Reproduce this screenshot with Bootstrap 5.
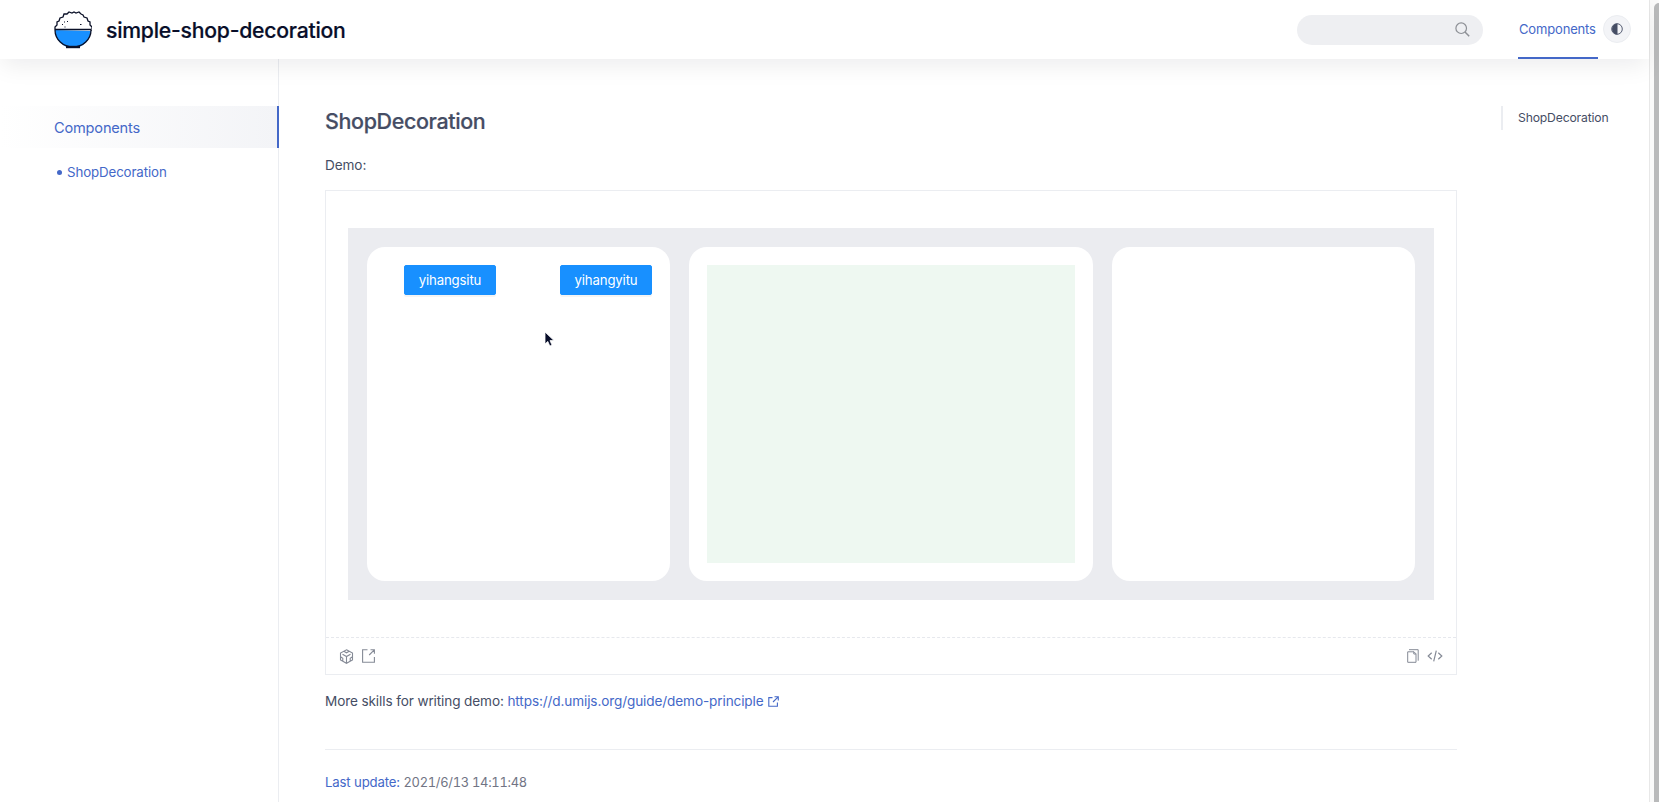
<!DOCTYPE html>
<html lang="en">
<head>
    <meta charset="UTF-8">
    <meta name="viewport" content="width=device-width, initial-scale=1.0">
    <link href="https://cdn.jsdelivr.net/npm/bootstrap@5.3.3/dist/css/bootstrap.min.css" rel="stylesheet">
    <script src="https://cdn.jsdelivr.net/npm/bootstrap@5.3.3/dist/js/bootstrap.bundle.min.js"></script>
    <title>ShopDecoration - simple-shop-decoration</title>
    <style>
        body {
            font-family: Inter, "Liberation Sans", sans-serif;
            font-size: 13.6px;
            color: #454d64;
            height: 802px;
            overflow: hidden;
        }
        a { color: #4468c8; text-decoration: none; }
        svg { display: block; flex: none; }

        .page { width: 1649px; }
        .scroll-track {
            width: 10px;
            padding: 3px 0 0 4px;
            background: #fafafa;
            border-left: 1px solid #e8e8e8;
        }
        .scroll-thumb { background: #b9babb; border-radius: 5px 0 0 0; }

        /* header */
        .site-header {
            height: 59px;
            padding: 0 18px 0 54px;
            background: #fff;
            box-shadow: 0 8px 24px -2px rgba(0, 0, 30, .08);
            z-index: 2;
        }
        .site-title { font-size: 21.2px; font-weight: 500; color: #080e29; margin-left: 14px; letter-spacing: -.24px; line-height: 60px; -webkit-text-stroke: .2px; }
        .search-box { width: 186px; height: 30px; background: #eeeff2; border: 0; padding-right: 13.5px; margin-right: 35px; }
        .nav-tab { width: 80px; height: 59px; line-height: 59px; font-size: 13px; letter-spacing: -.16px; border-bottom: 2px solid #4468c8; padding-left: 1px; white-space: nowrap; }
        .theme-btn { width: 28px; height: 28px; margin: -1px 0 0 5px; background: #f3f4f7; border: 1px solid #ebedf1; }

        /* left menu */
        .side-menu { width: 279px; padding-top: 47px; border-right: 1px solid #ebedf1; }
        .side-menu .menu-active {
            height: 42px;
            line-height: 44px;
            padding-left: 54px;
            margin-right: -1px;
            font-size: 14.6px;
            letter-spacing: -.2px;
            border-right: 2px solid #4468c8;
            background: linear-gradient(to left, #f3f4f7, rgba(248, 249, 251, 0));
        }
        .side-menu .menu-child { height: 48px; line-height: 48px; padding-left: 57px; font-size: 13.3px; letter-spacing: -.12px; }
        .menu-dot { width: 5px; height: 5px; background: #4468c8; margin-right: 5px; }

        /* content */
        .doc { width: 1132px; margin-left: 46px; }
        .doc h2 { font-size: 21.5px; font-weight: 500; line-height: 30px; letter-spacing: -.38px; margin: 47px 0 0; color: #454d64; -webkit-text-stroke: .2px; }
        .doc .intro { line-height: 24px; letter-spacing: -.1px; margin: 17px 0 13px; }
        .demo-box { height: 485px; border: 1px solid #ebedf1; }
        .demo-area { height: 446px; padding: 37px 22px 36px; }
        .shop { height: 372px; background: #ebecf0; padding: 19px; gap: 19px; }
        .shop-panel { background: #fff; border-radius: 18px; padding: 18px; }
        .shop-side { width: 303px; }
        .shop-source { padding-left: 37px; }
        .canvas { background: #eef8f1; }
        .btn-shop {
            --bs-btn-color: #fff;
            --bs-btn-bg: #1890ff;
            --bs-btn-border-color: #1890ff;
            height: 30px;
            width: 92px;
            padding: 0;
            font-size: 13.2px;
            letter-spacing: -.15px;
            line-height: 29px;
            border-radius: 2px;
            box-shadow: 0 2px 0 rgba(0, 0, 0, .045);
        }
        .demo-actions { height: 37px; padding: 0 13px; border-top: 1px dashed #e6e8ed; color: #858a96; }
        .more { line-height: 24px; margin: 14px 0 0; letter-spacing: -.12px; }
        .doc-footer {
            margin-top: 36px;
            padding-top: 20px;
            border-top: 1px solid #ebedf1;
            line-height: 24px;
            font-size: 13.2px;
            letter-spacing: -.16px;
            color: #717484;
        }
        .update-time { font-variant-numeric: tabular-nums; font-size: 12.9px; letter-spacing: -.28px; }

        /* right outline */
        .toc { margin: 47px 0 0 44px; height: 24px; line-height: 24px; font-size: 12.2px; letter-spacing: -.17px; padding-left: 15px; border-left: 2px solid #ebedf1; }

        .pointer { position: absolute; left: 544px; top: 331px; z-index: 3; }
    </style>
</head>
<body class="d-flex bg-white">
<div class="page position-relative">
    <header class="site-header position-relative d-flex align-items-center">
        <svg width="38" height="38" viewBox="0 0 38 38">
            <path d="M1 19 A18 18 0 0 0 37 19 Z" fill="#1890ff"/>
            <path d="M1 19v-3l2-2 0-3 2-1 1-3 3-1 1-3 3 0 2-2 3 1 2-1 2 1 3-1 2 2 2 1 1 2 3 1 1 3 2 1 0 3 2 2v4" fill="#fff" stroke="#0b1128" stroke-width="1.3"/>
            <path d="M1 18.5H37M1 19a18 17 0 0 0 36 0" fill="none" stroke="#0b1128" stroke-width="1.3"/>
            <path d="M12 36h14" stroke="#0b1128" stroke-width="2.4"/>
            <path d="M10 11h1M13 10.5h1M8 13.5h1M10.500 16h1M26 13.500h1.500" stroke="#0b1128" stroke-width="1"/>
        </svg>
        <span class="site-title">simple-shop-decoration</span>
        <div class="search-box rounded-pill d-flex align-items-center justify-content-end ms-auto">
            <svg width="15" height="15" viewBox="0 0 15 15" fill="none" stroke="#8d9096" stroke-width="1.2">
                <circle cx="6.200" cy="6.200" r="5.300"/>
                <path d="M10 10l4.200 4.200" stroke-width="1.500"/>
            </svg>
        </div>
        <a href="#" class="nav-tab">Components</a>
        <button class="theme-btn btn rounded-circle p-0 d-flex align-items-center justify-content-center">
            <svg width="12" height="12" viewBox="0 0 12 12">
                <circle cx="6" cy="6" r="5.300" fill="none" stroke="#454d64" stroke-width=".9"/>
                <path d="M6.500 .5A5.500 5.500 0 0 0 6.500 11.500Z" fill="#454d64"/>
            </svg>
        </button>
    </header>

    <div class="d-flex" style="height: 743px">
        <nav class="side-menu">
            <a href="#" class="menu-active d-block">Components</a>
            <a href="#" class="menu-child d-flex align-items-center"><span class="menu-dot rounded-circle"></span>ShopDecoration</a>
        </nav>

        <main class="doc">
            <h2>ShopDecoration</h2>
            <p class="intro">Demo:</p>
            <div class="demo-box">
                <div class="demo-area">
                    <div class="shop d-flex">
                        <div class="shop-panel shop-side shop-source d-flex justify-content-between align-items-start">
                            <button class="btn btn-shop">yihangsitu</button>
                            <button class="btn btn-shop">yihangyitu</button>
                        </div>
                        <div class="shop-panel flex-grow-1">
                            <div class="canvas h-100"></div>
                        </div>
                        <div class="shop-panel shop-side"></div>
                    </div>
                </div>
                <div class="demo-actions d-flex align-items-center">
                    <!-- codesandbox -->
                    <svg width="15" height="15" viewBox="0 0 15 15" fill="none" stroke="currentColor" stroke-width="1.100">
                        <path d="M7.500 .8l6 3.300v6.800l-6 3.400-6-3.400V4.100zM3.500 5.200l4 2.300 4-2.300M7.500 7.500v6.500M4.800 2.300l2.700 1.500 2.700-1.500M1.500 7.800l2.300 1.400v3M13.500 7.800l-2.300 1.400v3"/>
                    </svg>
                    <!-- open in new tab -->
                    <svg class="ms-2" width="13" height="14" viewBox="0 0 13 14" fill="none" stroke="currentColor" stroke-width="1.100">
                        <path d="M5.500 .8H.6v12.500h11.800V8M8.500 .8h3.900v4M12.300 .9L7.200 6"/>
                    </svg>
                    <!-- copy -->
                    <svg class="ms-auto" width="12" height="14" viewBox="0 0 12 14" fill="none" stroke="currentColor" stroke-width="1">
                        <path d="M2 .7h9.200v11M.7 2.800h6.300l2 2v8.500H.7zM6.800 2.800v2.200H9"/>
                    </svg>
                    <!-- source code -->
                    <svg class="ms-2" width="16" height="12" viewBox="0 0 16 12" fill="none" stroke="currentColor" stroke-width="1.200">
                        <path d="M4.700 2.800L1.200 6l3.500 3.200M11.300 2.800L14.800 6l-3.500 3.200M9.300 .7L6.700 11.300"/>
                    </svg>
                </div>
            </div>
            <p class="more d-flex align-items-center">
                <span>More skills for writing demo:&nbsp;</span>
                <a href="https://d.umijs.org/guide/demo-principle" class="d-flex align-items-center">https://d.umijs.org/guide/demo-principle
                    <svg class="ms-1" width="11" height="11" viewBox="0 0 11 11" fill="none" stroke="currentColor" stroke-width="1.100">
                        <path d="M4.500 1.600H.8v8.600h8.600V6.500M6.500 .7h3.800v3.800M10.200 .8L5 6"/>
                    </svg>
                </a>
            </p>
            <div class="doc-footer"><a href="#">Last update:</a> <span class="update-time">2021/6/13 14:11:48</span></div>
        </main>

        <aside class="toc">ShopDecoration</aside>
    </div>

    <svg class="pointer" width="12" height="17" viewBox="0 0 12 17">
        <path d="M1 1v12l2.800-2.600 2 4.700 2.200-1-2-4.500h4z" fill="#080e29" stroke="#fff" stroke-width=".8"/>
    </svg>
</div>
<div class="scroll-track d-flex">
    <div class="scroll-thumb flex-grow-1"></div>
</div>
</body>
</html>
